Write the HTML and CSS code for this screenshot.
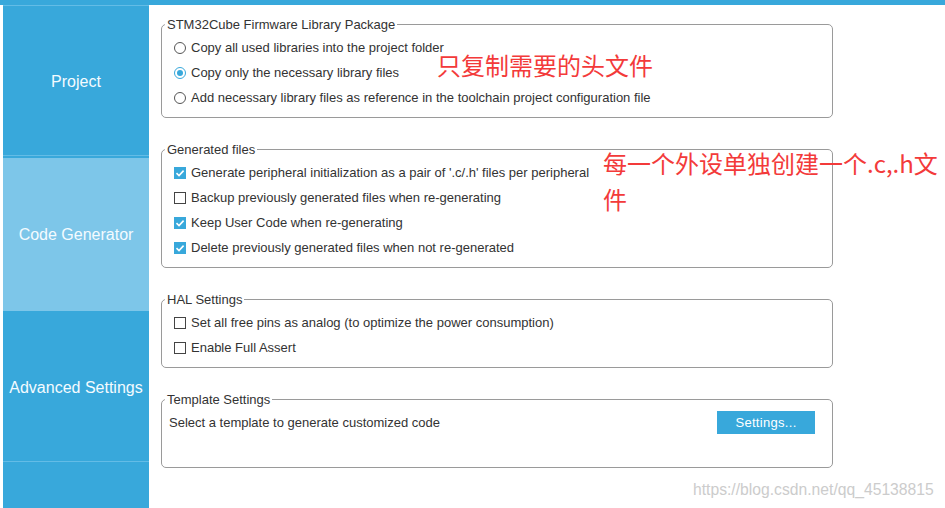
FILE: index.html
```html
<!DOCTYPE html>
<html lang="en">
<head>
<meta charset="utf-8">
<title>Project Manager - Code Generator</title>
<link rel="stylesheet" href="styles.css">
</head>
<body>
<div class="topbar"></div>
<div class="layout">
  <nav class="sidebar">
    <div class="nav-item nav-project">Project</div>
    <div class="nav-item nav-active">Code Generator</div>
    <div class="nav-item nav-adv">Advanced Settings</div>
  </nav>
  <main class="content">
    <fieldset class="group g-lib">
      <legend>STM32Cube Firmware Library Package</legend>
      <div class="row"><span class="radio"></span><span>Copy all used libraries into the project folder</span></div>
      <div class="row"><span class="radio radio-on"></span><span>Copy only the necessary library files</span></div>
      <div class="row"><span class="radio"></span><span>Add necessary library files as reference in the toolchain project configuration file</span></div>
    </fieldset>
    <fieldset class="group">
      <legend>Generated files</legend>
      <div class="row"><span class="check check-on"><svg viewBox="0 0 12 12" width="12" height="12"><polyline points="2.5,6.2 5,8.6 9.6,3.6" fill="none" stroke="#fff" stroke-width="1.6"/></svg></span><span>Generate peripheral initialization as a pair of '.c/.h' files per peripheral</span></div>
      <div class="row"><span class="check"></span><span>Backup previously generated files when re-generating</span></div>
      <div class="row"><span class="check check-on"><svg viewBox="0 0 12 12" width="12" height="12"><polyline points="2.5,6.2 5,8.6 9.6,3.6" fill="none" stroke="#fff" stroke-width="1.6"/></svg></span><span>Keep User Code when re-generating</span></div>
      <div class="row"><span class="check check-on"><svg viewBox="0 0 12 12" width="12" height="12"><polyline points="2.5,6.2 5,8.6 9.6,3.6" fill="none" stroke="#fff" stroke-width="1.6"/></svg></span><span>Delete previously generated files when not re-generated</span></div>
    </fieldset>
    <fieldset class="group">
      <legend>HAL Settings</legend>
      <div class="row"><span class="check"></span><span>Set all free pins as analog (to optimize the power consumption)</span></div>
      <div class="row"><span class="check"></span><span>Enable Full Assert</span></div>
    </fieldset>
    <fieldset class="group">
      <legend>Template Settings</legend>
      <div class="row row-template"><span>Select a template to generate customized code</span><button class="btn">Settings...</button></div>
      <div class="row"></div>
    </fieldset>
  </main>
</div>
<div class="note note-1">只复制需要的头文件</div>
<div class="note note-2">每一个外设单独创建一个.c,.h文件</div>
<div class="watermark">https://blog.csdn.net/qq_45138815</div>
</body>
</html>
```
FILE: styles.css
```css
html, body {
  margin: 0;
  padding: 0;
  background: #ffffff;
  width: 945px;
  height: 508px;
  overflow: hidden;
  font-family: "Liberation Sans", Arial, sans-serif;
  position: relative;
}

.topbar {
  height: 5px;
  background: #38a8db;
}

.layout {
  display: flex;
  height: 503px;
}

.sidebar {
  width: 146px;
  margin-left: 3px;
  background: #38a8db;
  border-top: 1px solid #63bce6;
  box-sizing: border-box;
  display: flex;
  flex-direction: column;
}

.nav-item {
  display: flex;
  align-items: center;
  justify-content: center;
  color: #f4fbff;
  font-size: 16px;
  white-space: nowrap;
  box-sizing: border-box;
}

.nav-project {
  height: 150px;
  padding-top: 2px;
  border-bottom: 1px solid #63bce6;
  margin-bottom: 2px;
}

.nav-active {
  height: 153px;
  background: #7dc6e9;
}

.nav-adv {
  height: 151px;
  padding-top: 3px;
  border-bottom: 1px solid #63bce6;
}

.content {
  padding: 11px 0 0 12px;
}

.group {
  box-sizing: border-box;
  width: 672px;
  margin: 0 0 23px 0;
  padding: 3px 12px 7px 3px;
  border: 1px solid #9a9a9a;
  border-radius: 5px;
  min-width: 0;
}

.group legend {
  padding: 2px 2px 0 2px;
  font-size: 13px;
  line-height: 14px;
  color: #333333;
}

.row {
  height: 25px;
  display: flex;
  align-items: center;
  gap: 5px;
  padding-left: 9px;
  font-size: 13px;
  color: #333333;
  white-space: nowrap;
}

.radio {
  width: 12px;
  height: 12px;
  box-sizing: border-box;
  border: 1px solid #555555;
  border-radius: 50%;
  background: #fff;
  flex: none;
  display: flex;
  align-items: center;
  justify-content: center;
}

.radio-on {
  border-color: #38a8db;
}

.radio-on::after {
  content: "";
  width: 6px;
  height: 6px;
  border-radius: 50%;
  background: #38a8db;
}

.check {
  width: 12px;
  height: 12px;
  box-sizing: border-box;
  border: 1px solid #444444;
  background: #fff;
  flex: none;
  display: block;
}

.check-on {
  border: none;
  background: #38a8db;
}

.check svg {
  display: block;
}

.row-template {
  padding-left: 4px;
  justify-content: space-between;
  padding-right: 5px;
}

.btn {
  width: 98px;
  height: 23px;
  border: none;
  background: #38a8db;
  color: #ffffff;
  font-family: "Liberation Sans", Arial, sans-serif;
  font-size: 13px;
  letter-spacing: 0.3px;
  padding: 0;
}

.note {
  position: absolute;
  color: #f33a3a;
  font-family: "Microsoft YaHei", "Noto Sans CJK SC", sans-serif;
  font-size: 24px;
  line-height: 36px;
}

.note-1 {
  left: 437px;
  top: 47px;
  white-space: nowrap;
}

.note-2 {
  left: 603px;
  top: 145px;
  width: 340px;
}

.watermark {
  position: absolute;
  left: 693px;
  top: 481px;
  font-size: 15.7px;
  line-height: 18px;
  color: #cccccc;
  text-shadow: 0 0 1px #ffffff;
}
```
